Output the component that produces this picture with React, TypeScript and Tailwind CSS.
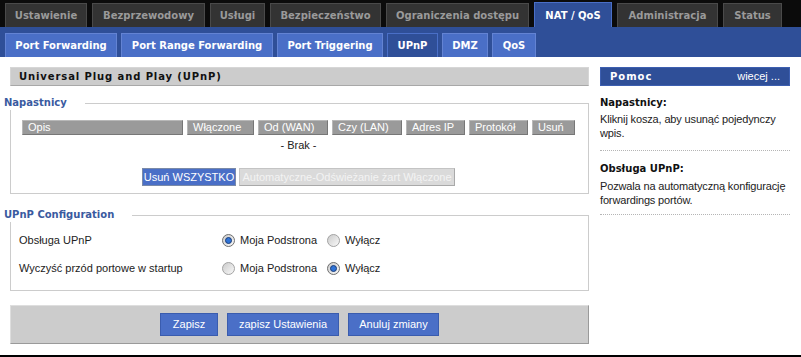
import React from "react";

const topTabs: { label: string; w: string; active?: boolean }[] = [
  { label: "Ustawienie", w: "w-[82px]" },
  { label: "Bezprzewodowy", w: "w-[113px]" },
  { label: "Usługi", w: "w-[55px]" },
  { label: "Bezpieczeństwo", w: "w-[111px]" },
  { label: "Ograniczenia dostępu", w: "w-[143px]" },
  { label: "NAT / QoS", w: "w-[78px]", active: true },
  { label: "Administracja", w: "w-[101px]" },
  { label: "Status", w: "w-[59px]" },
];

const subTabs: { label: string; w: string; active?: boolean }[] = [
  { label: "Port Forwarding", w: "w-[112px]" },
  { label: "Port Range Forwarding", w: "w-[152px]" },
  { label: "Port Triggering", w: "w-[106px]" },
  { label: "UPnP", w: "w-[51px]", active: true },
  { label: "DMZ", w: "w-[46px]" },
  { label: "QoS", w: "w-[44px]" },
];

const cols: { label: string; w: string }[] = [
  { label: "Opis", w: "w-[161px]" },
  { label: "Włączone", w: "w-[67px]" },
  { label: "Od (WAN)", w: "w-[70px]" },
  { label: "Czy (LAN)", w: "w-[70px]" },
  { label: "Adres IP", w: "w-[59px]" },
  { label: "Protokół", w: "w-[59px]" },
  { label: "Usuń", w: "w-[43px]" },
];

function Radio({ checked }: { checked?: boolean }) {
  return (
    <svg width="13" height="13" viewBox="0 0 13 13" className="shrink-0">
      <defs>
        <linearGradient id={checked ? "rg1" : "rg0"} x1="0" y1="0" x2="1" y2="1">
          <stop offset="0" stopColor="#c9c9c9" />
          <stop offset="1" stopColor="#fbfbfb" />
        </linearGradient>
      </defs>
      <circle cx="6.5" cy="6.5" r="6" fill={`url(#${checked ? "rg1" : "rg0"})`} stroke={checked ? "#6f6f6f" : "#a3a3a3"} strokeWidth="1" />
      {checked && <circle cx="6.5" cy="6.5" r="3" fill="#2f73d6" stroke="#1b3c78" strokeWidth="1" />}
    </svg>
  );
}

function Legend({ children }: { children: React.ReactNode }) {
  return (
    <div className="absolute left-[-7px] top-[-8px] h-[14px] bg-white pr-[18px] font-['DejaVu_Sans',sans-serif] text-[10px] font-bold leading-[14px] text-[#3a5a9f]">
      {children}
    </div>
  );
}

function BlueBtn({ children, w }: { children: React.ReactNode; w: string }) {
  return (
    <div className={`${w} flex h-[23px] items-center justify-center border border-[#3a5cae] bg-[#4a6fc7] text-[11px] text-white`}>
      {children}
    </div>
  );
}

export default function App() {
  return (
    <div className="h-[357px] w-[801px] overflow-hidden bg-black font-['Liberation_Sans',Arial,sans-serif] text-[#111]">
      {/* top tabs */}
      <div className="flex h-[27px] items-end gap-[5px] bg-[#0b0b0b] pl-[5px]">
        {topTabs.map((t) =>
          t.active ? (
            <div
              key={t.label}
              className={`${t.w} flex h-[25px] items-center justify-center border-x border-t border-[#4a6fc7] bg-[#2f4f98] font-['DejaVu_Sans',sans-serif] text-[10px] font-bold text-white`}
            >
              {t.label}
            </div>
          ) : (
            <div
              key={t.label}
              className={`${t.w} flex h-[24px] items-center justify-center border-x border-t border-[#4a4a4a] bg-[#333333] font-['DejaVu_Sans',sans-serif] text-[10px] font-bold text-[#9a9a9a]`}
            >
              {t.label}
            </div>
          )
        )}
      </div>
      {/* sub tabs */}
      <div className="flex h-[30px] items-end gap-[4px] bg-[#2f4f98] pl-[5px]">
        {subTabs.map((t) => (
          <div
            key={t.label}
            className={`${t.w} flex h-[24px] items-center justify-center border-x border-t font-['DejaVu_Sans',sans-serif] text-[10px] font-bold text-white ${
              t.active ? "border-[#4a6fc7] bg-[#2f4f98]" : "border-[#6383d3] bg-[#4a6fc7]"
            }`}
          >
            {t.label}
          </div>
        ))}
      </div>
      {/* content */}
      <div className="flex h-[298px] bg-white">
        {/* left */}
        <div className="ml-[10px] w-[579px] pt-[10px]">
          <div className="flex h-[19px] items-center border border-[#d6d6d6] border-b-[#a8a8a8] bg-[#cccccc] pl-[8px] font-['DejaVu_Sans',sans-serif] text-[10px] font-bold tracking-[0.9px] text-[#111]">
            Universal Plug and Play (UPnP)
          </div>

          {/* Napastnicy */}
          <div className="relative mt-[17px] border border-[#cccccc] pb-[7px] pl-[11px] pt-[16px]">
            <Legend>Napastnicy</Legend>
            <div className="flex gap-[4px]">
              {cols.map((c) => (
                <div
                  key={c.label}
                  className={`${c.w} flex h-[15px] items-center border border-[#b8b8b8] border-b-[#777] border-r-[#777] bg-[#9a9a9a] pl-[5px] text-[11px] text-white`}
                >
                  {c.label}
                </div>
              ))}
            </div>
            <div className="mt-[3px] flex h-[14px] w-[553px] items-center justify-center text-[11px] text-[#222]">- Brak -</div>
            <div className="mt-[16px] flex w-[553px] justify-center gap-[3px]">
              <div className="flex h-[18px] w-[94px] items-center justify-center border border-[#7a8aa8] bg-[#4a6fc7] text-[11px] text-white">
                Usuń WSZYSTKO
              </div>
              <div className="flex h-[18px] w-[216px] items-center justify-center border border-[#c4c4c4] border-b-[#a9a9a9] border-r-[#a9a9a9] bg-[#dadada] text-[11px] text-[#f3f3f3]">
                Automatyczne-Odświeżanie żart Włączone
              </div>
            </div>
          </div>

          {/* UPnP Configuration */}
          <div className="relative mt-[21px] border border-[#cccccc] pb-[12px] pl-[8px] pt-[14px]">
            <Legend>UPnP Configuration</Legend>
            <div className="flex h-[20px] items-center text-[11px] text-[#222]">
              <div className="w-[203px]">Obsługa UPnP</div>
              <Radio checked />
              <span className="ml-[5px] w-[87px]">Moja Podstrona</span>
              <Radio />
              <span className="ml-[5px]">Wyłącz</span>
            </div>
            <div className="mt-[8px] flex h-[20px] items-center text-[11px] text-[#222]">
              <div className="w-[203px]">Wyczyść przód portowe w startup</div>
              <Radio />
              <span className="ml-[5px] w-[87px]">Moja Podstrona</span>
              <Radio checked />
              <span className="ml-[5px]">Wyłącz</span>
            </div>
          </div>

          {/* bottom bar */}
          <div className="mt-[14px] flex h-[39px] items-center justify-center gap-[9px] border border-[#dedede] border-b-[#9a9a9a] border-r-[#9a9a9a] bg-[#cccccc]">
            <BlueBtn w="w-[58px]">Zapisz</BlueBtn>
            <BlueBtn w="w-[112px]">zapisz Ustawienia</BlueBtn>
            <BlueBtn w="w-[91px]">Anuluj zmiany</BlueBtn>
          </div>
        </div>

        {/* right */}
        <div className="ml-[11px] w-[190px] pt-[10px]">
          <div className="flex h-[19px] items-center justify-between border border-[#3d5fb0] bg-[#2f4f98] pl-[9px] pr-[9px] text-white">
            <span className="font-['DejaVu_Sans',sans-serif] text-[10px] font-bold tracking-[1px]">Pomoc</span>
            <span className="text-[11px]">wiecej ...</span>
          </div>
          <div className="border-b border-dotted border-[#b5b5b5] pb-[10px] pt-[10px]">
            <div className="font-['DejaVu_Sans',sans-serif] text-[10px] font-bold leading-[14px] text-[#111]">Napastnicy:</div>
            <div className="mt-[2px] text-[11px] leading-[14px] tracking-[-0.15px] text-[#222]">Kliknij kosza, aby usunąć pojedynczy wpis.</div>
          </div>
          <div className="border-b border-dotted border-[#b5b5b5] pb-[7px] pt-[11px]">
            <div className="font-['DejaVu_Sans',sans-serif] text-[10px] font-bold leading-[14px] text-[#111]">Obsługa UPnP:</div>
            <div className="mt-[3px] text-[11px] leading-[14px] tracking-[-0.15px] text-[#222]">Pozwala na automatyczną konfigurację forwardings portów.</div>
          </div>
        </div>
      </div>
    </div>
  );
}
